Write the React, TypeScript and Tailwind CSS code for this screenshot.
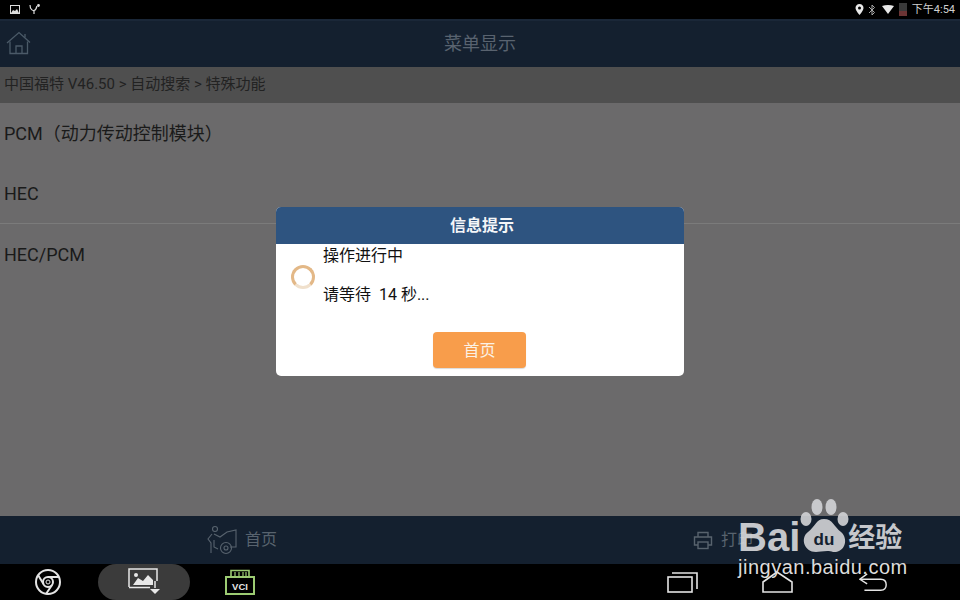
const CJK = "font-['Roboto','Noto_Sans_CJK_SC',sans-serif]";

const ROWS = [
  { label: "PCM（动力传动控制模块）", height: "h-[61px]", line: false },
  { label: "HEC", height: "h-[60px]", line: true },
  { label: "HEC/PCM", height: "h-[61px]", line: false },
];

function StatusBar() {
  return (
    <div className="flex h-[19px] items-center justify-between bg-black pl-[10px] pr-[5px]">
      <div className="flex items-center gap-[9px]">
        <svg width="10" height="9" viewBox="0 0 10 9">
          <rect x="0.5" y="0.5" width="9" height="8" fill="none" stroke="#ddd" />
          <path d="M1 8 L3 5 L5 6 L7 4 L9 8 Z" fill="#ddd" />
        </svg>
        <svg width="11" height="11" viewBox="0 0 11 11" fill="none" stroke="#ddd" strokeWidth="1.2">
          <path d="M1 1 L1.5 4 Q3 7 5 6.5 Q7 6 8 2" />
          <path d="M5 7 V10" />
          <circle cx="9.5" cy="1.5" r="0.8" fill="#ddd" />
        </svg>
      </div>
      <div className="flex items-center">
        <svg width="9" height="12" viewBox="0 0 9 12" className="mr-[4px]">
          <path d="M4.5 0 C2 0 0.5 2 0.5 4 C0.5 6.5 4.5 11 4.5 11 C4.5 11 8.5 6.5 8.5 4 C8.5 2 7 0 4.5 0 Z" fill="#e8e8e8" />
          <circle cx="4.5" cy="4" r="1.5" fill="#000" />
        </svg>
        <svg width="8" height="12" viewBox="0 0 8 12" fill="none" stroke="#aaa" strokeWidth="1" className="mr-[6px]">
          <path d="M1 3 L6.5 8.5 L4 11 V1 L6.5 3.5 L1 9" />
        </svg>
        <svg width="12" height="9" viewBox="0 0 12 9" className="mr-[5px]">
          <path d="M0 1 Q6 -1 12 1 L6 9 Z" fill="#e8e8e8" />
        </svg>
        <div className="mr-[5px] flex h-[13px] w-[8px] flex-col justify-end bg-[#3a3a3a]">
          <div className="h-[5px] bg-[#6b3434]" />
        </div>
        <span className={`${CJK} text-[11px] leading-none text-[#cfcfcf]`}>下午4:54</span>
      </div>
    </div>
  );
}

function HomeIcon() {
  return (
    <svg width="26" height="24" viewBox="0 0 26 24" fill="none" stroke="#4b5a68" strokeWidth="1.3">
      <path d="M1 12 L13 1.5 L24 11.5" />
      <path d="M4 10.5 V22.5 H21.5 V10.5" />
      <path d="M10 22.5 V15 H16 V22.5" />
      <path d="M19 3 V6.5" />
    </svg>
  );
}

function MechanicIcon() {
  return (
    <svg width="32" height="30" viewBox="0 0 32 30" fill="none" stroke="#58636e" strokeWidth="1.1">
      <circle cx="9" cy="4" r="2.5" />
      <path d="M6 9 L2 14 L5 18 V28 M8 9 L14 12 L21 7 L30 5 V22 H24" />
      <path d="M8 15 V22 L12 24" />
      <circle cx="20" cy="23" r="5.5" />
      <circle cx="20" cy="23" r="2" />
    </svg>
  );
}

function PrinterIcon() {
  return (
    <svg width="20" height="19" viewBox="0 0 20 19" fill="none" stroke="#58636e" strokeWidth="1.4">
      <path d="M5 6 V1.5 H15 V6" />
      <path d="M5 14 H1.5 V6 H18.5 V14 H15" />
      <rect x="5" y="11" width="10" height="6.5" />
    </svg>
  );
}

function VciIcon() {
  return (
    <svg width="30" height="26" viewBox="0 0 30 26" className="ml-[35px]">
      <path d="M6 8 V1.5 H24 V8" fill="none" stroke="#9ccb72" strokeWidth="1.6" />
      <path d="M10 3 V7 M14 3 V7 M18 3 V7 M21 3 V7" stroke="#9ccb72" strokeWidth="1.2" />
      <rect x="1" y="8" width="28" height="17" fill="none" stroke="#9ccb72" strokeWidth="2" />
      <text x="15" y="20.5" textAnchor="middle" fontFamily="Liberation Sans" fontSize="9.5" fontWeight="700" fill="#e4e4e4">VCI</text>
    </svg>
  );
}

function NavBar() {
  return (
    <div className="flex h-[36px] items-center bg-black">
      <svg width="28" height="28" viewBox="0 0 28 28" fill="none" stroke="#e4e4e4" strokeWidth="2" className="ml-[34px]">
        <circle cx="14" cy="14" r="12" />
        <circle cx="14" cy="14" r="5" />
        <circle cx="14" cy="14" r="2" strokeWidth="1" />
        <path d="M14 9 H25 M9.5 16 L4 7 M18 17 L12 26" />
      </svg>
      <div className="ml-[36px] flex h-[36px] w-[92px] items-center justify-center rounded-full bg-[#3b3b3b]">
        <svg width="32" height="28" viewBox="0 0 32 28" className="mt-[-1px]">
          <path d="M1 19 V1 H29 V13" fill="none" stroke="#e8e8e8" strokeWidth="1.5" />
          <path d="M1 19.5 H22" stroke="#e8e8e8" strokeWidth="1.5" />
          <path d="M5 17 L10 10 L15 13 L20 7 L25 12 V17 Z" fill="#e8e8e8" />
          <circle cx="8" cy="7" r="2" fill="#e8e8e8" />
          <path d="M27 13 V20" stroke="#e8e8e8" strokeWidth="1.5" />
          <path d="M22 21 H32 L27 26 Z" fill="#e8e8e8" />
        </svg>
      </div>
      <VciIcon />
      <div className="ml-auto flex items-center">
        <svg width="32" height="22" viewBox="0 0 32 22" fill="none" stroke="#e4e4e4" strokeWidth="1.6" className="mr-[63px]">
          <rect x="1" y="6" width="24" height="15" />
          <path d="M5 2 H30 V18" />
        </svg>
        <svg width="32" height="22" viewBox="0 0 32 22" fill="none" stroke="#e4e4e4" strokeWidth="1.6" className="mr-[65px]">
          <path d="M1 11 L15 1 L30 11 V21 H1 Z" />
        </svg>
        <svg width="29" height="20" viewBox="0 0 32 22" fill="none" stroke="#e4e4e4" strokeWidth="1.6" className="mr-[72px]">
          <path d="M9 2 L1 8 L9 13" />
          <path d="M1 8 H24 Q30 8 30 14 Q30 20 24 20 H6" />
        </svg>
      </div>
    </div>
  );
}

function Dialog() {
  return (
    <div className="absolute inset-x-[276px] top-[207px] h-[169px] overflow-hidden rounded-[5px] bg-white">
      <div className={`${CJK} flex h-[37px] items-center justify-center bg-[#2e5480] pl-[4px] text-[16px] font-bold text-[#f4f6f8]`}>
        信息提示
      </div>
      <div className="flex items-center pl-[15px]">
        <div className="mt-[2px] h-[24px] w-[24px] shrink-0 rounded-full border-[3px] border-[#e3b887] border-b-[#f0e0cc]" />
        <div className={`${CJK} ml-[8px] text-[16px] leading-[24px] text-[#111]`}>
          <div className="h-[24px]">操作进行中</div>
          <div className="mt-[15px]">请等待&nbsp; 14 秒...</div>
        </div>
      </div>
      <div className="mt-[25px] flex justify-center pr-[1px]">
        <div className={`${CJK} flex h-[36px] w-[93px] items-center justify-center rounded-[4px] bg-[#f89d4b] pt-[2px] text-[16px] text-[#fbf1e5] shadow-[0_1px_1px_rgba(0,0,0,0.15)]`}>
          首页
        </div>
      </div>
    </div>
  );
}

function Watermark() {
  return (
    <div className="absolute left-[738px] top-[498px] flex h-[82px] w-[175px] flex-col text-[#d9dadc]">
      <div className="flex h-[55px] items-end">
        <span className="font-['Liberation_Sans',sans-serif] text-[40px] leading-[32px] font-bold opacity-90">Bai</span>
        <svg width="50" height="55" viewBox="0 0 50 55" className="shrink-0 opacity-90">
          <ellipse cx="17" cy="9" rx="5.5" ry="8" fill="#d3d4d7" />
          <ellipse cx="31" cy="9" rx="5.5" ry="8" fill="#d3d4d7" />
          <ellipse cx="6" cy="21" rx="5.5" ry="7" fill="#d3d4d7" />
          <ellipse cx="43" cy="21" rx="5.5" ry="7" fill="#d3d4d7" />
          <path d="M24 21 C16 21 15 29 8 34 C0 40 4 54 16 54 C20 54 28 52 33 54 C45 55 49 41 41 34 C34 29 33 21 24 21 Z" fill="#d3d4d7" />
          <text x="24" y="47" textAnchor="middle" fontFamily="Liberation Sans" fontSize="17" fontWeight="700" fill="#14222f">du</text>
        </svg>
        <span className={`${CJK} ml-[-2px] text-[27px] leading-[29px] font-bold opacity-90`}>经验</span>
      </div>
      <span className="mt-[3px] font-['Liberation_Sans',sans-serif] text-[20px] leading-[22px] tracking-[0.5px] text-[#dcdcdc]">jingyan.baidu.com</span>
    </div>
  );
}

export default function App() {
  return (
    <div className={`${CJK} relative flex h-[600px] w-[960px] flex-col overflow-hidden bg-black`}>
      <StatusBar />
      <header className="relative flex h-[48px] items-center justify-center border-t-2 border-[#1a2738] bg-[#14202f] pb-[2px]">
        <div className="absolute left-[6px] top-[10px]">
          <HomeIcon />
        </div>
        <span className="text-[18px] text-[#59636f]">菜单显示</span>
      </header>
      <div className="flex h-[36px] items-center bg-[#4f4f4f] pb-[1px] pl-[4px] text-[15px] text-[#222]">
        中国福特 V46.50 &gt; 自动搜索 &gt; 特殊功能
      </div>
      <main className="flex-1 bg-[#6b6a6b]">
        {ROWS.map((row) => (
          <div
            key={row.label}
            className={`flex items-center pl-[4px] text-[18px] text-[#1a1a1a] ${row.height} ${row.line ? "border-b border-[#7b7b7b]" : ""}`}
          >
            {row.label}
          </div>
        ))}
      </main>
      <footer className="flex h-[48px] items-center bg-[#14202f] text-[16px] text-[#58636e]">
        <div className="ml-[206px] flex items-center gap-[7px]">
          <MechanicIcon />
          <span>首页</span>
        </div>
        <div className="ml-[416px] flex items-center gap-[8px]">
          <PrinterIcon />
          <span>打印</span>
        </div>
      </footer>
      <NavBar />
      <Dialog />
      <Watermark />
    </div>
  );
}
